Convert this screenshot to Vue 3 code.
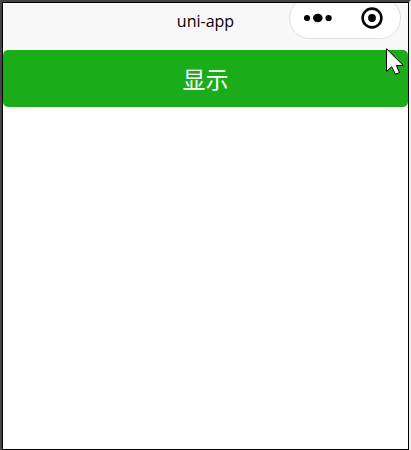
<template>
    <div class="window">
        <div class="phone">
            <header class="navbar">
                <h1 class="title">{{ title }}</h1>
                <div class="capsule">
                    <button class="capsule-btn" type="button" aria-label="更多">
                        <svg width="28" height="10" viewBox="0 0 28 10">
                            <circle cx="3" cy="5" r="3.1" />
                            <ellipse cx="13.8" cy="5" rx="4.8" ry="4.2" />
                            <circle cx="24.6" cy="5" r="3.1" />
                        </svg>
                    </button>
                    <button class="capsule-btn" type="button" aria-label="关闭">
                        <svg width="24" height="22" viewBox="0 0 24 22">
                            <circle cx="11" cy="11" r="9.4" fill="none" stroke="#000" stroke-width="2.6" />
                            <circle cx="11" cy="11" r="3.9" />
                        </svg>
                    </button>
                </div>
            </header>
            <main>
                <button class="show-btn" type="button" @click="toggle">{{ visible ? '隐藏' : '显示' }}</button>
            </main>
        </div>
        <svg class="cursor" width="19" height="28" viewBox="0 0 19 28">
            <path d="M0.5 0.8V23.5L5.7 18.8L9.5 26.3L13.5 24.5L10.4 17.5H17.3Z" fill="#fff" stroke="#000" />
        </svg>
    </div>
</template>
<script setup>
    import { ref } from 'vue';
    const title = 'uni-app';
    const visible = ref(false);
    const toggle = () => {
        visible.value = !visible.value;
    };
</script>
<style>
    body{
        margin: 0;
    }
</style>
<style scoped>
    .window{
        position: relative;
        box-sizing: border-box;
        min-height: 100vh;
        display: flex;
        border: 2px solid #444;
        border-right-color: #f0f0f0;
        border-bottom: none;
        font-family: "Noto Sans", "Noto Sans CJK SC", sans-serif;
    }
    .phone{
        flex: 1;
        border: 1px solid #000;
        background-color: #fefefe;
    }
    .navbar{
        display: grid;
        grid-template-columns: 1fr auto 1fr;
        height: 47px;
        overflow: hidden;
        background-color: #f8f8f8;
    }
    .title{
        grid-column: 2;
        margin: 0;
        color: #000;
        font-family: "Open Sans", "Noto Sans", sans-serif;
        font-size: 16px;
        font-weight: 400;
        line-height: 36px;
    }
    .capsule{
        justify-self: end;
        box-sizing: border-box;
        width: 112px;
        height: 42px;
        margin-top: -6px;
        margin-right: 7px;
        display: flex;
        border: 1px solid #e0e0e0;
        border-radius: 21px;
        background-color: #fff;
    }
    .capsule-btn{
        flex: 1;
        display: flex;
        align-items: center;
        justify-content: center;
        padding: 0;
        border: none;
        background: none;
    }
    .show-btn{
        display: block;
        width: 100%;
        height: 57px;
        padding: 0 0 2px;
        border: none;
        border-radius: 5px;
        background-color: #1aad19;
        color: #fff;
        font-family: "Noto Sans CJK SC", sans-serif;
        font-size: 23px;
    }
    .show-btn:active{
        background-color: #179b16;
    }
    .cursor{
        position: absolute;
        top: 46px;
        right: 4px;
        pointer-events: none;
    }
</style>
